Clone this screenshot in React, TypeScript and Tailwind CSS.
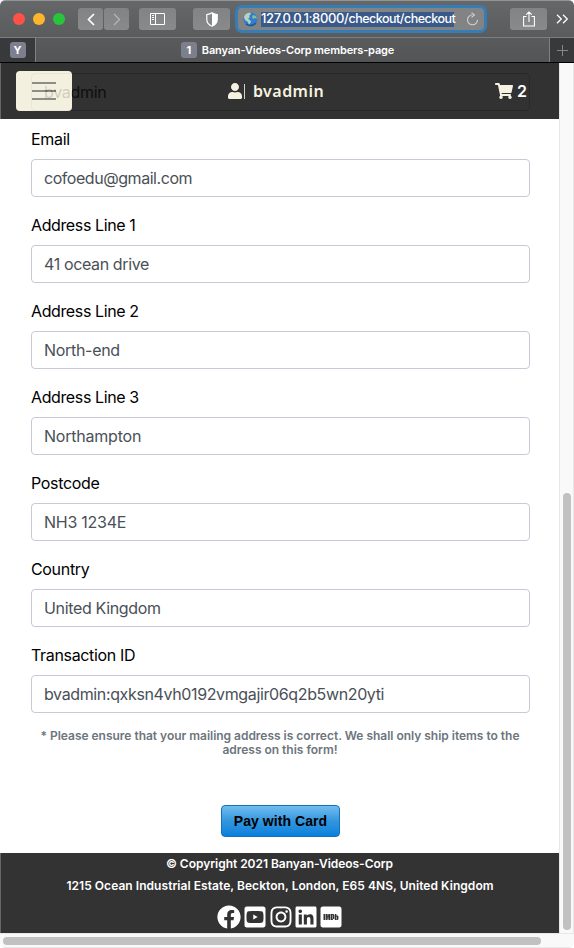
import React from "react";
import {
  FaUser,
  FaShoppingCart,
  FaFacebook,
  FaYoutubeSquare,
  FaInstagram,
  FaLinkedin,
  FaImdb,
} from "react-icons/fa";

const fields = [
  { label: "Email", value: "cofoedu@gmail.com", ls: "tracking-[-0.3px]", vs: "tracking-[-0.45px]" },
  { label: "Address Line 1", value: "41 ocean drive", ls: "tracking-[-0.38px]", vs: "tracking-[-0.37px]" },
  { label: "Address Line 2", value: "North-end", ls: "tracking-[-0.38px]", vs: "tracking-[-0.3px]" },
  { label: "Address Line 3", value: "Northampton", ls: "tracking-[-0.38px]", vs: "tracking-[-0.22px]" },
  { label: "Postcode", value: "NH3 1234E", ls: "tracking-[-0.33px]", vs: "tracking-[-0.25px]" },
  { label: "Country", value: "United Kingdom", ls: "tracking-[-0.33px]", vs: "tracking-[-0.34px]" },
  { label: "Transaction ID", value: "bvadmin:qxksn4vh0192vmgajir06q2b5wn20yti", ls: "tracking-[-0.34px]", vs: "tracking-[-0.37px]" },
];

const toolButton = "flex h-[22px] shrink-0 items-center justify-center rounded-[3px] bg-gradient-to-b from-[#828384] to-[#898a8b]";

function Toolbar() {
  return (
    <div className="flex h-[37px] items-center rounded-t-[5px] border-t border-[#929496] bg-gradient-to-b from-[#656768] to-[#5a5b5c] pl-[13px]">
      <div className="flex shrink-0 gap-2">
        <span className="size-3 rounded-full bg-[#ff5148]" />
        <span className="size-3 rounded-full bg-[#fdb62b]" />
        <span className="size-3 rounded-full bg-[#27c53c]" />
      </div>
      <div className="ml-[13px] flex shrink-0 gap-px">
        <div className={`${toolButton} w-[25px]`}>
          <svg width="8" height="13" viewBox="0 0 8 13" fill="none" stroke="#fff" strokeWidth="1.7"><path d="M7 1 1.5 6.5 7 12" /></svg>
        </div>
        <div className={`${toolButton} w-[25px]`}>
          <svg width="8" height="13" viewBox="0 0 8 13" fill="none" stroke="#b4b5b6" strokeWidth="1.3"><path d="m1 1 5.5 5.5L1 12" /></svg>
        </div>
      </div>
      <div className={`${toolButton} ml-[10px] w-[37px]`}>
        <svg width="15" height="12" viewBox="0 0 15 12" fill="none" stroke="#fff">
          <path d="M.5.5h14v11H.5zM5.5.5v11M2 2.5h2M2 4.5h2M2 6.5h2" />
        </svg>
      </div>
      <div className={`${toolButton} ml-[17px] w-[37px]`}>
        <svg width="12" height="15" viewBox="0 0 12 15">
          <path d="M6 .8C4.8 1.9 3 2.4.8 2.6v5.2C.8 11 3 13 6 14.2c3-1.2 5.2-3.2 5.2-6.4V2.6C9 2.4 7.2 1.9 6 .8Z" fill="none" stroke="#fff" strokeWidth="1.2" />
          <path d="M6 1c1.2.9 3 1.4 5.2 1.6v5.2C11.2 11 9 13 6 14Z" fill="#fff" />
        </svg>
      </div>
      <div className="ml-[5px] flex h-[28px] w-[252px] shrink-0 items-center rounded-[7px] border-[3px] border-[#377db5] bg-[#828384] pl-[5px]">
        <svg className="shrink-0" width="15" height="15" viewBox="0 0 15 15">
          <circle cx="7.5" cy="7.5" r="7" fill="#2f7fca" />
          <path d="M1 5C2 2 4 1 7 .6L8 2 6 4l1 1-2 2 2 1 1 2-2 3-1-3-3-2Z" fill="#b7d3c0" />
          <path d="m10 3 3 1 1 3-2-1-2 1-1-2Z" fill="#86b99e" />
          <path d="M3 12c3 2 7 2 10-1" fill="none" stroke="#1c559d" strokeWidth="1.5" />
        </svg>
        <div className="ml-[3px] flex h-[15px] w-[193px] shrink-0 items-center whitespace-nowrap bg-[#38598a] font-[Inter,sans-serif] text-[13px] font-medium tracking-[-0.35px] text-white">
          <span>127.0.0.1:8000/</span>
          <span className="text-[12.5px] tracking-[-0.5px]">checkout/checkout</span>
        </div>
        <svg className="ml-[12px] shrink-0" width="13" height="14" viewBox="0 0 13 14" fill="none" stroke="#d0d1d2" strokeWidth="1.1">
          <path d="M6.5 2.8a5 5 0 1 0 5 5M5.5.6l3 2.3-3 2.5" />
        </svg>
      </div>
      <div className={`${toolButton} ml-[23px] w-[37px]`}>
        <svg width="12" height="16" viewBox="0 0 12 16" fill="none" stroke="#fff" strokeWidth="1.1">
          <path d="M3.5 5.5H.6v9.5h10.8V5.5H8.5M6 11V1M3.2 3.6 6 .9l2.8 2.7" />
        </svg>
      </div>
      <svg className="ml-[9px] shrink-0" width="13" height="10" viewBox="0 0 13 10" fill="none" stroke="#fff" strokeWidth="1.3">
        <path d="m1 .7 4.3 4.3L1 9.3M7 .7 11.3 5 7 9.3" />
      </svg>
    </div>
  );
}

function Tabs() {
  const badge = "flex size-4 shrink-0 items-center justify-center rounded-[3px] bg-[#7e7f8e] font-[Inter,sans-serif] text-[11px] font-bold text-white";
  return (
    <div className="flex h-[26px] border-y border-t-[#7c7d7e] border-b-black bg-[#57585a]">
      <div className="flex w-[36px] items-center justify-center border-r border-[#808182] bg-[#38393a]">
        <span className={badge}>Y</span>
      </div>
      <div className="flex flex-1 items-center justify-center bg-gradient-to-b from-[#5a5b5c] to-[#535455] pr-[10px]">
        <span className={badge}>1</span>
        <span className="ml-[5px] whitespace-nowrap font-[Inter,sans-serif] text-[11px] font-semibold tracking-[-0.15px] text-white">
          Banyan-Videos-Corp members-page
        </span>
      </div>
      <div className="flex w-[25px] items-center justify-center border-l border-[#808182] bg-[#38393a]">
        <svg width="11" height="11" viewBox="0 0 11 11" stroke="#858687"><path d="M5.5 0v11M0 5.5h11" /></svg>
      </div>
    </div>
  );
}

function Nav() {
  return (
    <nav className="absolute inset-x-0 top-0 flex h-[56px] items-center justify-between border-l border-[#404040] bg-black pl-[15px] pr-[32px] opacity-80">
      <div className="flex h-10 w-14 items-center justify-center rounded bg-[#f1edd8]">
        <svg width="24" height="20" viewBox="0 0 24 20" stroke="#73716a" strokeWidth="1.8"><path d="M0 2h24M0 10h24M0 18h24" /></svg>
      </div>
      <div className="mr-[16px] flex items-center text-[#f5efda]">
        <FaUser size={16} />
        <span className="ml-px h-[15px] w-px bg-[#c8c4b8]" />
        <span className="ml-[8px] font-['Noto_Sans',sans-serif] text-[16px] font-semibold leading-6 tracking-[0.45px]">bvadmin</span>
      </div>
      <div className="flex items-center text-[#f5efda]">
        <FaShoppingCart size={18} />
        <span className="ml-1 font-[Inter,sans-serif] text-[16px] font-semibold text-white">2</span>
      </div>
    </nav>
  );
}

export default function App() {
  const input = "flex h-[38px] items-center rounded border border-[#c5cad5] px-3 text-[16px] leading-6 text-[#495057]";
  return (
    <div className="flex h-[948px] w-[574px] flex-col overflow-hidden rounded-t-[5px] rounded-b-[5px] bg-[#f9f9f9] font-[Inter,sans-serif]">
      <Toolbar />
      <Tabs />
      <div className="flex h-[870px]">
        <main className="relative flex w-[559px] flex-col bg-white">
          <form className="flex flex-col gap-4 pl-[31px] pr-[29px] pt-[10px]">
            <div className={`${input} tracking-[-0.3px]`}>bvadmin</div>
            {fields.map((f) => (
              <div key={f.label} className="flex flex-col gap-2">
                <label className={`text-[16px] leading-6 text-black ${f.ls}`}>{f.label}</label>
                <div className={`${input} ${f.vs}`}>{f.value}</div>
              </div>
            ))}
          </form>
          <p className="mt-[16px] whitespace-nowrap pl-px text-center text-[12px] font-semibold leading-[14px] tracking-[-0.02px] text-[#6c757d]">
            * Please ensure that your mailing address is correct. We shall only ship items to the
            <br />
            adress on this form!
          </p>
          <div className="mt-[48px] flex justify-center pl-[2px]">
            <button className="h-[32px] w-[119px] rounded-[4px] border border-[#1672b4] bg-gradient-to-b from-[#70bdee] via-[#3296de] to-[#0380dc] font-['Liberation_Sans',sans-serif] text-[14px] font-bold tracking-[0.06px] text-black">
              Pay with Card
            </button>
          </div>
          <footer className="mt-auto flex h-[80px] flex-col items-center border-l border-[#666] bg-[#333] text-[12px] font-semibold leading-[22px] text-white">
            <div className="pr-px tracking-[-0.03px]">© Copyright 2021 Banyan-Videos-Corp</div>
            <div className="tracking-[0.05px]">1215 Ocean Industrial Estate, Beckton, London, E65 4NS, United Kingdom</div>
            <div className="mt-[8px] flex items-center pr-px">
              <FaFacebook size={24} />
              <FaYoutubeSquare size={24} className="ml-[2px]" />
              <FaInstagram size={24} className="ml-[2px]" />
              <FaLinkedin size={24} className="ml-[1px]" />
              <FaImdb size={24} className="ml-[1px]" />
            </div>
          </footer>
          <Nav />
        </main>
        <div className="flex w-[15px] flex-col items-center border-x border-[#e8e8e8] bg-[#f9f9f9]">
          <div className="mt-[430px] h-[437px] w-[8px] rounded-full bg-[#c1c1c1]" />
        </div>
      </div>
      <div className="flex h-[15px] items-center border-y border-[#e8e8e8] pl-[3px]">
        <div className="h-2 w-[538px] rounded-full bg-[#c1c1c1]" />
      </div>
    </div>
  );
}
